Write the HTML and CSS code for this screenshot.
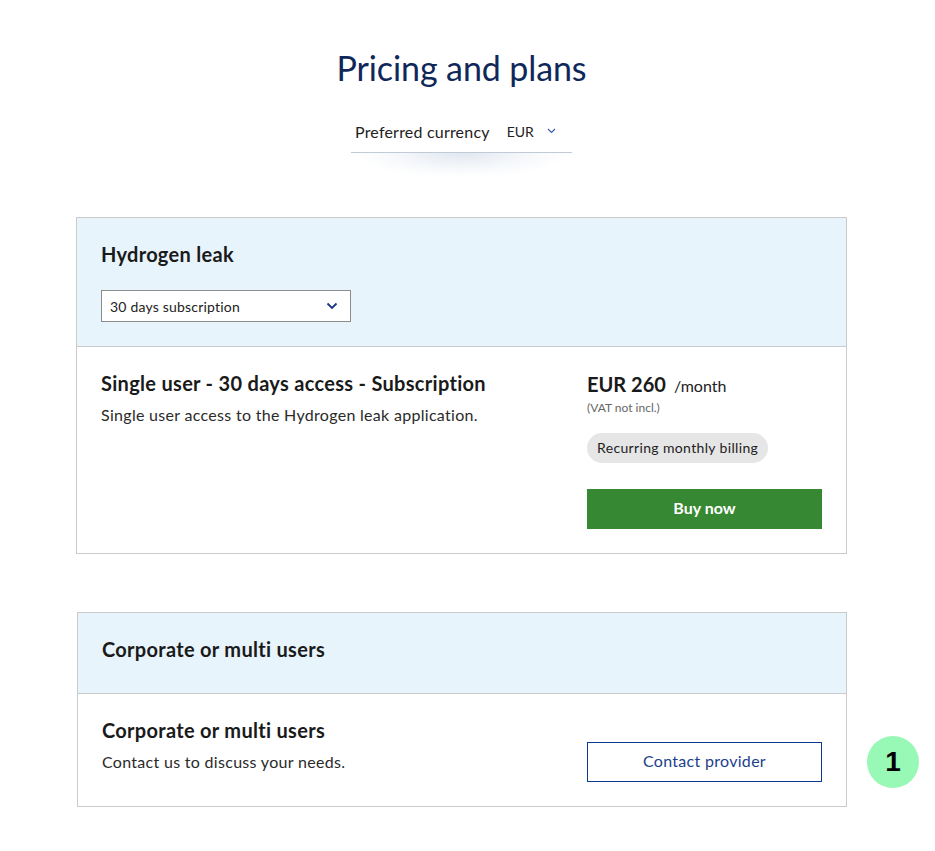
FILE: index.html
```html
<!DOCTYPE html>
<html lang="en">
<head>
<meta charset="utf-8">
<title>Pricing and plans</title>
<link rel="stylesheet" href="styles.css">
</head>
<body>
<main class="page">
  <h1 class="page-title">Pricing and plans</h1>
  <div class="currency-wrap">
    <div class="currency">
      <span class="currency-label">Preferred currency</span>
      <span class="currency-value">EUR</span>
      <svg class="currency-chevron" width="9" height="6" viewBox="0 0 9 6"><path d="M1 1l3.5 3.5L8 1" fill="none" stroke="#3a5bab" stroke-width="1.2"/></svg>
    </div>
  </div>

  <section class="card">
    <div class="card-head">
      <h2 class="card-title">Hydrogen leak</h2>
      <div class="select">
        <span>30 days subscription</span>
        <svg width="12" height="8" viewBox="0 0 12 8"><path d="M1.5 1.5L6 6l4.5-4.5" fill="none" stroke="#14357f" stroke-width="1.8"/></svg>
      </div>
    </div>
    <div class="card-body">
      <div class="plan-info">
        <h3 class="plan-title">Single user - 30 days access - Subscription</h3>
        <p class="plan-desc">Single user access to the Hydrogen leak application.</p>
      </div>
      <div class="plan-side">
        <div class="price"><strong>EUR 260</strong><span class="per">/month</span></div>
        <div class="vat">(VAT not incl.)</div>
        <span class="pill">Recurring monthly billing</span>
        <button class="btn btn-buy">Buy now</button>
      </div>
    </div>
  </section>

  <section class="card card-corp">
    <div class="card-head card-head-corp">
      <h2 class="card-title">Corporate or multi users</h2>
    </div>
    <div class="card-body card-body-corp">
      <div class="plan-info corp-info">
        <h3 class="plan-title">Corporate or multi users</h3>
        <p class="plan-desc">Contact us to discuss your needs.</p>
      </div>
      <div class="plan-side">
        <button class="btn btn-contact">Contact provider</button>
      </div>
      <span class="badge">1</span>
    </div>
  </section>
</main>
</body>
</html>
```

FILE: styles.css
```css
* { box-sizing: border-box; }

html, body {
  margin: 0;
  padding: 0;
  background: #ffffff;
}

body {
  font-family: Lato, "Open Sans", "Liberation Sans", sans-serif;
  color: #1d1d1d;
}

.page {
  width: 771px;
  margin-left: 76px;
  padding-top: 46px;
}

.page-title {
  margin: 0;
  text-align: center;
  font-size: 34px;
  line-height: 44px;
  font-weight: 400;
  color: #10275a;
  letter-spacing: -0.1px;
}

.currency-wrap {
  display: flex;
  justify-content: center;
  margin-top: 20px;
}

.currency {
  position: relative;
  width: 221px;
  height: 43px;
  display: flex;
  align-items: center;
  padding: 0 0 0 4px;
  border-bottom: 1px solid #c2cad5;
}

.currency::after {
  content: "";
  position: absolute;
  left: 4px;
  right: 4px;
  top: 43px;
  height: 24px;
  background: radial-gradient(ellipse at 50% 0%, rgba(200, 212, 228, 0.55) 0%, rgba(220, 228, 240, 0.25) 45%, rgba(255, 255, 255, 0) 72%);
}

.currency-label {
  font-size: 16px;
  letter-spacing: 0.2px;
  color: #222;
}

.currency-value {
  font-size: 14px;
  color: #222;
  margin-left: 17px;
}

.currency-chevron {
  margin-left: 13px;
}

.card {
  margin-top: 64px;
  border: 1px solid #cbcbcb;
  background: #fff;
}

.card-corp {
  margin-top: 58px;
  margin-left: 1px;
}

.card-head {
  background: #e8f4fb;
  padding: 24px 24px 24px;
  border-bottom: 1px solid #cbcbcb;
}

.card-head-corp {
  padding: 24px 24px 32px;
}

.card-title {
  margin: 0;
  font-size: 20px;
  line-height: 24px;
  font-weight: 700;
  letter-spacing: 0.3px;
  color: #1a1a1a;
}

.select {
  margin-top: 24px;
  width: 250px;
  height: 32px;
  border: 1px solid #8c8c8c;
  background: #fff;
  display: flex;
  align-items: center;
  justify-content: space-between;
  padding: 0 12px 0 8px;
  font-size: 14px;
  letter-spacing: 0.2px;
  color: #222;
}

.card-body {
  display: flex;
  justify-content: space-between;
  padding: 24px 24px 24px 24px;
  position: relative;
}

.card-body-corp {
  align-items: flex-end;
}

.plan-info {
  flex: 1;
}

.corp-info {
  padding-bottom: 8px;
}

.plan-title {
  margin: 0;
  font-size: 20px;
  line-height: 24px;
  font-weight: 700;
  letter-spacing: 0.3px;
  color: #1a1a1a;
}

.plan-desc {
  margin: 8px 0 0;
  font-size: 16px;
  line-height: 24px;
  letter-spacing: 0.3px;
  color: #2a2a2a;
}

.plan-side {
  width: 235px;
  display: flex;
  flex-direction: column;
  align-items: flex-start;
}

.price {
  display: flex;
  align-items: baseline;
  height: 25px;
  margin-top: 1px;
}

.price strong {
  font-size: 20px;
  line-height: 24px;
  font-weight: 700;
  color: #1a1a1a;
}

.per {
  font-size: 16px;
  margin-left: 8px;
  color: #222;
}

.vat {
  font-size: 12px;
  line-height: 16px;
  color: #666;
  margin-top: 3px;
}

.pill {
  margin-top: 17px;
  height: 30px;
  line-height: 30px;
  padding: 0 10px;
  border-radius: 15px;
  background: #e6e6e6;
  font-size: 14px;
  letter-spacing: 0.35px;
  color: #222;
}

.btn {
  width: 235px;
  height: 40px;
  padding: 0 0 3px;
  font-family: inherit;
  font-size: 16px;
  cursor: pointer;
}

.btn-buy {
  margin-top: 26px;
  border: 0;
  background: #378832;
  color: #fff;
  font-weight: 700;
}

.btn-contact {
  background: #fff;
  border: 1px solid #0c3a8e;
  color: #1c3f8c;
  letter-spacing: 0.3px;
}

.badge {
  position: absolute;
  right: -73px;
  bottom: 18px;
  width: 52px;
  height: 52px;
  border-radius: 50%;
  background: #98f8b6;
  color: #000;
  font-family: "Liberation Sans", Arial, sans-serif;
  font-size: 28px;
  font-weight: 700;
  display: flex;
  align-items: center;
  justify-content: center;
}
```
